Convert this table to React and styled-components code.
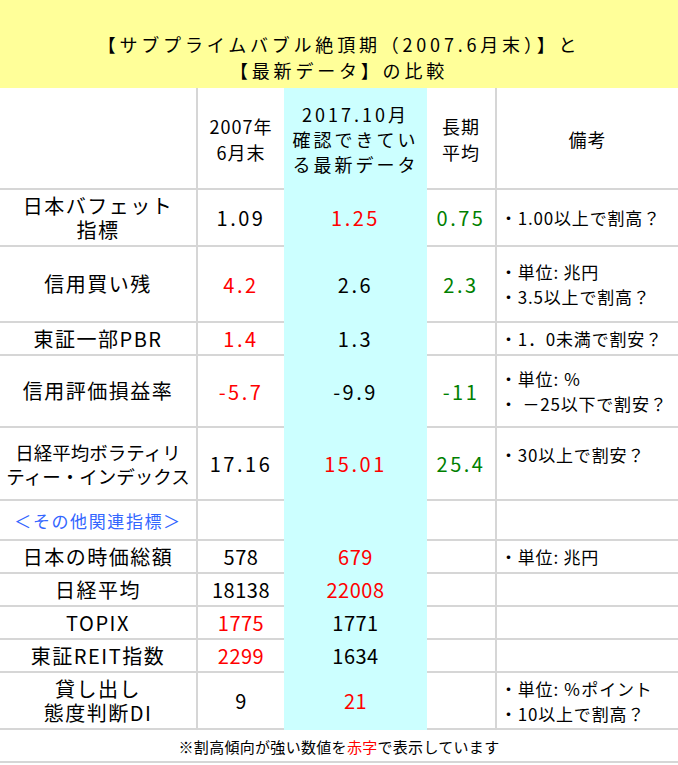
import React from 'react';
import styled, { createGlobalStyle } from 'styled-components';

const GlobalStyle = createGlobalStyle`
    html, body {
        margin: 0;
        padding: 0;
        background: #ffffff;
    }
    body {
        font-family: "Noto Sans CJK JP", "Noto Sans", sans-serif;
        color: #000000;
    }
`;

const LINE = '#d6d6d6';
const BLUE = '#ccffff';

const Page = styled.div`
    width: 678px;
    height: 765px;
    overflow: hidden;
    background: #ffffff;
`;

const TitleBand = styled.div`
    height: 88px;
    box-sizing: border-box;
    padding-top: 31px;
    background: #ffff99;
    text-align: center;
    font-size: 18px;
    line-height: 26px;
    letter-spacing: 3.8px;
`;

const Table = styled.div`
    display: grid;
    grid-template-columns: 196px 88px 143px 68px 183px;
    grid-template-rows: 102px 57px 76px 33px 72px 73px 40px 33px 33px 33px 33px 57px 33px;
`;

const Cell = styled.div`
    box-sizing: border-box;
    display: flex;
    align-items: center;
    justify-content: center;
    text-align: center;
    border-bottom: 2px solid ${(p) => (p.$blue ? BLUE : LINE)};
    border-left: ${(p) => (p.$divider ? `2px solid ${LINE}` : 'none')};
    background: ${(p) => (p.$blue ? BLUE : '#ffffff')};
`;

const HeadCell = styled(Cell)`
    font-size: 18px;
    line-height: ${(p) => (p.$blue ? '25px' : '26px')};
    letter-spacing: ${(p) => (p.$blue ? '3px' : '1px')};
    padding-top: 2px;
`;

const LabelCell = styled(Cell)`
    font-size: ${(p) => (p.$compact ? '18.5px' : '20px')};
    line-height: 24px;
    letter-spacing: ${(p) => (p.$compact ? '0' : '1.5px')};
    white-space: nowrap;
`;

const tones = {
    red: '#ff0000',
    green: '#008000',
    black: '#000000',
};

const NumCell = styled(Cell)`
    font-size: 20px;
    letter-spacing: ${(p) => (p.$spaced ? '2.5px' : '0.5px')};
    color: ${(p) => tones[p.$tone || 'black']};
`;

const NoteCell = styled(Cell)`
    justify-content: flex-start;
    align-items: ${(p) => (p.$top ? 'flex-start' : 'center')};
    padding: ${(p) => (p.$top ? '14px 0 0 3px' : '0 0 0 3px')};
    text-align: left;
    font-size: 17px;
    line-height: 25px;
    letter-spacing: 0.8px;
    white-space: nowrap;
`;

const SectionCell = styled(Cell)`
    font-size: 17px;
    letter-spacing: 1.6px;
    color: #3366ff;
`;

const FootCell = styled(Cell)`
    grid-column: 1 / -1;
    font-size: 15px;
    letter-spacing: 0.3px;
    padding-top: 2px;
`;

const Red = styled.span`
    color: #ff0000;
`;

const rows = [
    { label: ['日本バフェット', '指標'], a: '1.09', b: '1.25', bTone: 'red', c: '0.75', notes: ['・1.00以上で割高？'], spaced: true },
    { label: ['信用買い残'], a: '4.2', aTone: 'red', b: '2.6', c: '2.3', notes: ['・単位: 兆円', '・3.5以上で割高？'], spaced: true },
    { label: ['東証一部PBR'], a: '1.4', aTone: 'red', b: '1.3', c: '', notes: ['・1．0未満で割安？'], spaced: true },
    { label: ['信用評価損益率'], a: '-5.7', aTone: 'red', b: '-9.9', c: '-11', notes: ['・単位: ％', '・ －25以下で割安？'], spaced: true },
    { label: ['日経平均ボラティリ', 'ティー・インデックス'], compact: true, a: '17.16', b: '15.01', bTone: 'red', c: '25.4', notes: ['・30以上で割安？'], top: true, spaced: true },
    { section: '＜その他関連指標＞' },
    { label: ['日本の時価総額'], a: '578', b: '679', bTone: 'red', notes: ['・単位: 兆円'] },
    { label: ['日経平均'], a: '18138', b: '22008', bTone: 'red', notes: [] },
    { label: ['TOPIX'], a: '1775', aTone: 'red', b: '1771', notes: [] },
    { label: ['東証REIT指数'], a: '2299', aTone: 'red', b: '1634', notes: [] },
    { label: ['貸し出し', '態度判断DI'], a: '9', b: '21', bTone: 'red', notes: ['・単位: ％ポイント', '・10以上で割高？'] },
];

const lines = (arr) =>
    arr.map((t, i) => (
        <React.Fragment key={i}>
            {i > 0 && <br />}
            {t}
        </React.Fragment>
    ));

const App = () => {
    return (
        <Page>
            <GlobalStyle />
            <TitleBand>
                【サブプライムバブル絶頂期（2007.6月末）】と
                <br />
                【最新データ】の比較
            </TitleBand>
            <Table>
                <HeadCell />
                <HeadCell $divider>
                    <div>2007年<br />6月末</div>
                </HeadCell>
                <HeadCell $blue>
                    <div>2017.10月<br />確認できてい<br />る最新データ</div>
                </HeadCell>
                <HeadCell>
                    <div>長期<br />平均</div>
                </HeadCell>
                <HeadCell $divider>備考</HeadCell>

                {rows.map((r, i) =>
                    r.section ? (
                        <React.Fragment key={i}>
                            <SectionCell>{r.section}</SectionCell>
                            <Cell $divider />
                            <Cell $blue />
                            <Cell />
                            <Cell $divider />
                        </React.Fragment>
                    ) : (
                        <React.Fragment key={i}>
                            <LabelCell $compact={r.compact}>
                                <div>{lines(r.label)}</div>
                            </LabelCell>
                            <NumCell $divider $tone={r.aTone} $spaced={r.spaced}>{r.a}</NumCell>
                            <NumCell $blue $tone={r.bTone} $spaced={r.spaced}>{r.b}</NumCell>
                            <NumCell $tone="green" $spaced={r.spaced}>{r.c}</NumCell>
                            <NoteCell $divider $top={r.top}>
                                <div>{lines(r.notes)}</div>
                            </NoteCell>
                        </React.Fragment>
                    )
                )}

                <FootCell>
                    ※割高傾向が強い数値を<Red>赤字</Red>で表示しています
                </FootCell>
            </Table>
        </Page>
    );
};

export default App;
